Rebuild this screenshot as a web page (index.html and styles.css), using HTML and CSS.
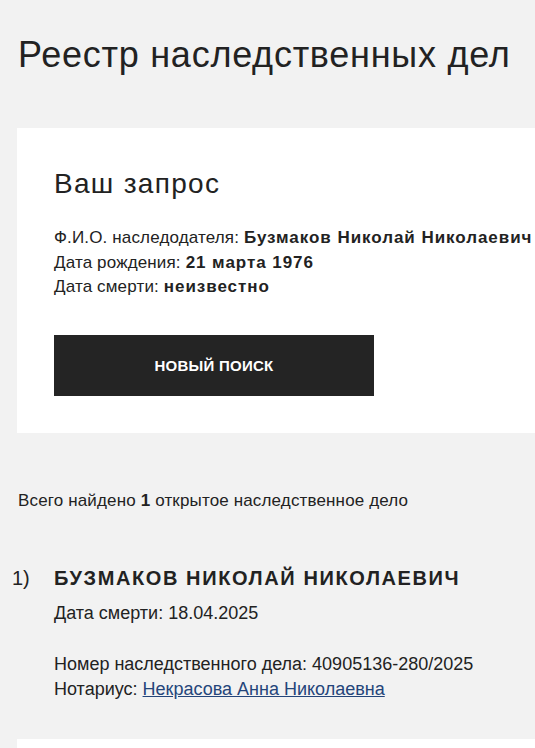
FILE: index.html
```html
<!DOCTYPE html>
<html lang="ru">
<head>
<meta charset="utf-8">
<title>Реестр наследственных дел</title>
<link rel="stylesheet" href="styles.css">
</head>
<body>
<div class="page">
  <h1 class="title">Реестр наследственных дел</h1>

  <section class="card">
    <h2 class="card-title">Ваш запрос</h2>
    <div class="info">
      <div>Ф.И.О. наследодателя: <b>Бузмаков Николай Николаевич</b></div>
      <div>Дата рождения: <b>21 марта 1976</b></div>
      <div>Дата смерти: <b>неизвестно</b></div>
    </div>
    <button class="btn" type="button">Новый поиск</button>
  </section>

  <p class="total">Всего найдено <b>1</b> открытое наследственное дело</p>

  <ol class="results">
    <li class="result">
      <span class="num">1)</span>
      <div class="body">
        <div class="name">БУЗМАКОВ НИКОЛАЙ НИКОЛАЕВИЧ</div>
        <div class="death">Дата смерти: 18.04.2025</div>
        <div class="meta">
          <div>Номер наследственного дела: 40905136-280/2025</div>
          <div>Нотариус: <a href="#" class="link">Некрасова Анна Николаевна</a></div>
        </div>
      </div>
    </li>
  </ol>

  <section class="card next"></section>
</div>
</body>
</html>
```

FILE: styles.css
```css
html, body {
  margin: 0;
  padding: 0;
  background: #f2f2f2;
  overflow: hidden;
}

body {
  font-family: "Liberation Sans", Arial, sans-serif;
  color: #222222;
}

.page {
  width: 620px;
  padding: 33px 0 0 17px;
}

.title {
  margin: 0 0 51px 1px;
  font-size: 36px;
  line-height: 44px;
  font-weight: 400;
  letter-spacing: 0.75px;
  white-space: nowrap;
}

.card {
  background: #ffffff;
  padding: 40px 0 37px 37px;
}

.card-title {
  margin: 0 0 26px;
  font-size: 28px;
  line-height: 32px;
  font-weight: 400;
  letter-spacing: 1.3px;
}

.info {
  font-size: 17px;
  line-height: 24.5px;
  letter-spacing: 0.15px;
  white-space: nowrap;
}

.info b {
  font-weight: 700;
  letter-spacing: 0.95px;
}

.btn {
  display: block;
  margin-top: 35.5px;
  width: 320px;
  height: 61px;
  border: 0;
  background: #242424;
  color: #ffffff;
  font-family: inherit;
  font-size: 15px;
  font-weight: 700;
  text-transform: uppercase;
  letter-spacing: 0.25px;
  cursor: pointer;
}

.total {
  margin: 56px 0 0 1px;
  font-size: 17px;
  line-height: 24px;
  letter-spacing: 0.15px;
}

.results {
  list-style: none;
  margin: 53px 0 0;
  padding: 0;
}

.result {
  display: grid;
  grid-template-columns: 43px 1fr;
  margin-left: -6px;
}

.num {
  font-size: 20px;
  line-height: 24px;
  padding-left: 1px;
}

.name {
  font-size: 20px;
  line-height: 24px;
  font-weight: 700;
  letter-spacing: 1.6px;
  white-space: nowrap;
}

.death {
  margin-top: 10.5px;
  font-size: 18px;
  line-height: 24px;
}

.meta {
  margin-top: 27px;
  font-size: 18px;
  line-height: 25px;
}

.link {
  color: #24457a;
  text-decoration: underline;
}

.card.next {
  margin-top: 37.5px;
  height: 60px;
  padding: 0;
}
```
